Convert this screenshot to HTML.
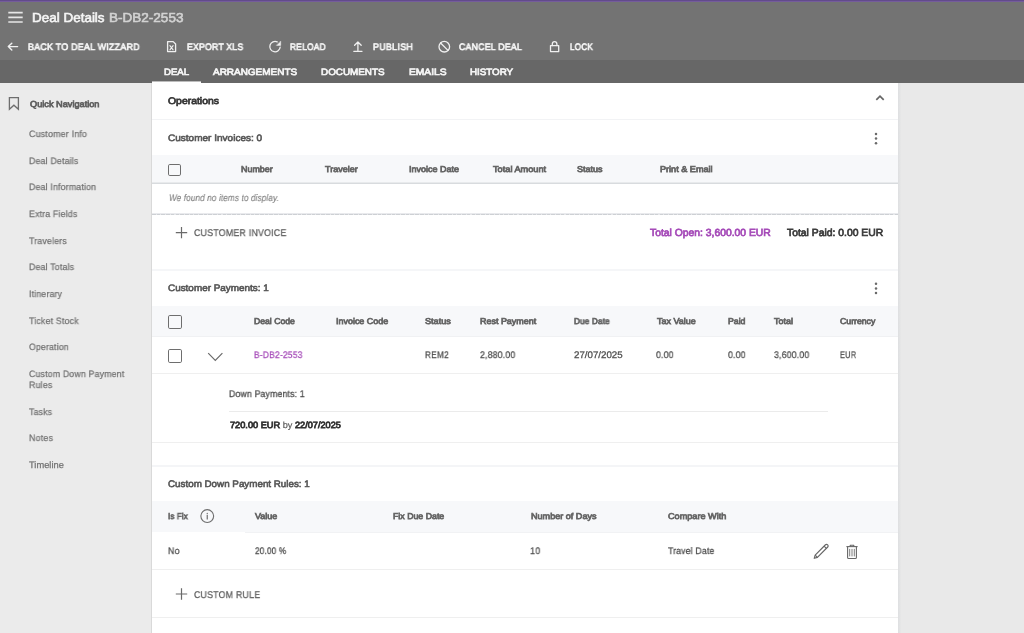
<!DOCTYPE html>
<html><head><meta charset="utf-8">
<style>
html,body{margin:0;padding:0}
body{width:1024px;height:633px;overflow:hidden;position:relative;background:#e9e9e9;font-family:"Liberation Sans",sans-serif}
.b{position:absolute}
.t{position:absolute;white-space:nowrap;will-change:transform;text-rendering:geometricPrecision;transform-origin:0 0;font-family:"Liberation Sans",sans-serif}
svg{position:absolute;overflow:visible}
.hl{position:absolute;height:1px}
.cb{position:absolute;box-sizing:border-box;border:1.9px solid #6e6e6e;border-radius:1.8px;background:transparent}
</style></head><body>
<!-- bars -->
<div class="b" style="left:0;top:0;width:1024px;height:1px;background:#624a8c"></div>
<div class="b" style="left:0;top:1px;width:1024px;height:1px;background:#745c9b"></div>
<div class="b" style="left:0;top:2px;width:1024px;height:58px;background:#737373"></div>
<div class="b" style="left:0;top:60px;width:1024px;height:23px;background:#676767"></div>
<div class="b" style="left:0;top:83px;width:152px;height:550px;background:#ebebeb"></div>
<div class="b" style="left:898px;top:83px;width:126px;height:550px;background:#e9e9e9"></div>
<div class="b" style="left:151px;top:83px;width:1px;height:550px;background:#d9d9d9"></div>
<div class="b" style="left:898px;top:83px;width:3px;height:550px;background:linear-gradient(90deg,#dedfe1,#e3e4e5 60%,#e8e8e8)"></div>
<div class="b" style="left:152px;top:83px;width:746px;height:550px;background:#fff"></div>
<div class="b" style="left:152px;top:81px;width:49px;height:1px;background:#bcbcbc"></div><div class="b" style="left:152px;top:82px;width:49px;height:1px;background:#fff"></div>

<!-- card lines -->
<div class="hl" style="left:152px;top:119px;width:746px;background:#f2f3f5"></div>
<div class="b" style="left:152px;top:155px;width:746px;height:28px;background:#f7f8fa"></div>
<div class="b" style="left:152px;top:182px;width:746px;height:1px;background:#e8eaec"></div><div class="b" style="left:152px;top:183px;width:746px;height:1px;background:#d8dbde"></div>
<div class="b" style="left:152px;top:213px;width:746px;height:1px;background:#e9eaed"></div><div class="b" style="left:152px;top:214px;width:746px;height:1px;background:repeating-linear-gradient(90deg,#cdd0d4 0,#cdd0d4 3.6px,#e6e7ea 3.6px,#e6e7ea 4.7px)"></div>
<div class="b" style="left:152px;top:269px;width:746px;height:2px;background:#f5f6f8"></div>
<div class="b" style="left:152px;top:306px;width:746px;height:30px;background:#f7f8fa"></div>
<div class="hl" style="left:152px;top:336px;width:746px;background:#f0f1f3"></div>
<div class="hl" style="left:152px;top:373px;width:746px;background:#efefef"></div>
<div class="b" style="left:229px;top:411px;width:599px;height:1px;background:#ebebeb"></div>
<div class="hl" style="left:152px;top:442px;width:746px;background:#efefef"></div>
<div class="b" style="left:152px;top:465px;width:746px;height:2px;background:#f4f5f7"></div>
<div class="b" style="left:152px;top:501px;width:746px;height:31px;background:#f7f8fa"></div>
<div class="hl" style="left:245px;top:532px;width:653px;background:#f1f2f4"></div>
<div class="hl" style="left:152px;top:569px;width:746px;background:#efefef"></div>
<div class="hl" style="left:152px;top:617px;width:746px;background:#efefef"></div>

<!-- header icons -->
<svg width="1024" height="633" style="left:0;top:0" viewBox="0 0 1024 633">
 <g stroke="#e6e6e6" stroke-width="1.7" fill="none" stroke-linecap="butt">
  <path d="M8.3 12.6H22.7M8.3 17.3H22.7M8.3 22H22.7"/>
 </g>
 <g stroke="#f0f0f0" stroke-width="1.3" fill="none" stroke-linecap="round" stroke-linejoin="round">
  <!-- back arrow -->
  <path d="M17.6 46.6H8.3M11.8 43.2L8.3 46.6L11.8 50.1" stroke-width="1.45"/>
  <!-- xls -->
  <path d="M167.6 41.6H173.2L175.6 44V51.6H167.6Z"/>
  <path d="M169.9 45.6L173.1 49.8M173.1 45.6L169.9 49.8" stroke-width="1.1"/>
  <!-- reload -->
  <path d="M280.2 47.05A5.2 5.2 0 1 1 277.2 41.9"/>
  <path d="M280.7 41.4V45.4H276.7Z" fill="#f0f0f0" stroke-width="0.5"/>
  <!-- upload -->
  <path d="M357.9 50.2V42.2M354.6 45.3L357.9 42L361.2 45.3M353.8 51.3H362"/>
  <!-- cancel -->
  <circle cx="444.3" cy="46.7" r="5.3"/>
  <path d="M440.6 43L448 50.4"/>
  <!-- lock -->
  <rect x="550.5" y="45.6" width="8.2" height="6"/>
  <path d="M552.3 45.6V44A2.3 2.3 0 0 1 556.9 44V45.6"/>
 </g>
 <!-- bookmark -->
 <path d="M9.4 97.7H18.4V109.3L13.9 105.2L9.4 109.3Z" stroke="#6e6e6e" stroke-width="1.3" fill="none" stroke-linejoin="miter"/>
 <!-- chevron up -->
 <path d="M876.3 99.9L880 96.2L883.7 99.9" stroke="#666" stroke-width="1.7" fill="none" stroke-linecap="butt"/>
 <!-- kebabs -->
 <g fill="#6a6a6a">
  <circle cx="876" cy="134.1" r="1.25"/><circle cx="876" cy="138.6" r="1.25"/><circle cx="876" cy="143.3" r="1.25"/>
  <circle cx="876" cy="283.8" r="1.25"/><circle cx="876" cy="288.5" r="1.25"/><circle cx="876" cy="293.1" r="1.25"/>
 </g>
 <!-- chevron down -->
 <path d="M208.2 353.2L215.3 360.3L222.4 353.2" stroke="#6a6a6a" stroke-width="1.2" fill="none"/>
 <!-- plus -->
 <g stroke="#6a6a6a" stroke-width="1.2" fill="none">
  <path d="M175.8 232.6H187.2M181.5 226.9V238.3"/>
  <path d="M175.8 594H187.2M181.5 588.3V599.7"/>
 </g>
 <!-- info -->
 <g stroke="#6e6e6e" fill="none">
  <circle cx="207.25" cy="516.05" r="6.4" stroke-width="1.1"/>
  <path d="M207.25 514.8V519.4" stroke-width="1.2"/>
 </g>
 <circle cx="207.25" cy="513.4" r="0.65" fill="#6e6e6e"/>
 <!-- pencil -->
 <g stroke="#666" stroke-width="1.15" fill="none" stroke-linejoin="round">
  <path d="M814.2 558.3L815.17 555.07L825.47 544.77A1.6 1.6 0 0 1 827.73 547.03L817.43 557.33Z"/>
  <path d="M815.17 555.07L817.43 557.33M824.07 546.17L826.33 548.43"/>
 </g>
 <!-- trash -->
 <g stroke="#666" stroke-width="1.1" fill="none" stroke-linejoin="round">
  <path d="M846.4 546.6H857.6"/>
  <path d="M850.2 546.4V545.3H853.8V546.4"/>
  <path d="M847.6 546.8V557.4A1.1 1.1 0 0 0 848.7 558.5H855.3A1.1 1.1 0 0 0 856.4 557.4V546.8"/>
  <path d="M849.7 548.9V556.4M852 548.9V556.4M854.3 548.9V556.4" stroke-width="0.85"/>
 </g>
</svg>
<div class="cb" style="left:168px;top:164px;width:12.5px;height:12px"></div>
<div class="cb" style="left:168px;top:315px;width:13.6px;height:13.6px"></div>
<div class="cb" style="left:168px;top:349px;width:13.6px;height:13.5px"></div>

<div class="t" style="left:32.06px;top:11.00px;font-size:12.99px;line-height:12.99px;font-style:normal;color:#f5f5f5;-webkit-text-stroke:0.6px #f5f5f5;letter-spacing:0.000px;transform:scaleX(1.0370)">Deal Details</div>
<div class="t" style="left:108.96px;top:11.00px;font-size:12.99px;line-height:12.99px;font-style:normal;color:#d2d2d2;-webkit-text-stroke:0.6px #d2d2d2;letter-spacing:0.000px;transform:scaleX(1.0419)">B-DB2-2553</div>
<div class="t" style="left:27.65px;top:43.01px;font-size:9.36px;line-height:9.36px;font-style:normal;color:#f4f4f4;-webkit-text-stroke:0.7px #f4f4f4;letter-spacing:0.250px;transform:scaleX(0.9519)">BACK TO DEAL WIZZARD</div>
<div class="t" style="left:187.15px;top:43.01px;font-size:9.36px;line-height:9.36px;font-style:normal;color:#f4f4f4;-webkit-text-stroke:0.7px #f4f4f4;letter-spacing:0.273px;transform:scaleX(0.9246)">EXPORT XLS</div>
<div class="t" style="left:289.85px;top:43.01px;font-size:9.36px;line-height:9.36px;font-style:normal;color:#f4f4f4;-webkit-text-stroke:0.7px #f4f4f4;letter-spacing:0.328px;transform:scaleX(0.8899)">RELOAD</div>
<div class="t" style="left:373.15px;top:43.01px;font-size:9.36px;line-height:9.36px;font-style:normal;color:#f4f4f4;-webkit-text-stroke:0.7px #f4f4f4;letter-spacing:0.277px;transform:scaleX(0.9543)">PUBLISH</div>
<div class="t" style="left:459.35px;top:43.01px;font-size:9.36px;line-height:9.36px;font-style:normal;color:#f4f4f4;-webkit-text-stroke:0.7px #f4f4f4;letter-spacing:0.273px;transform:scaleX(0.9349)">CANCEL DEAL</div>
<div class="t" style="left:570.05px;top:43.01px;font-size:9.36px;line-height:9.36px;font-style:normal;color:#f4f4f4;-webkit-text-stroke:0.7px #f4f4f4;letter-spacing:0.374px;transform:scaleX(0.8597)">LOCK</div>
<div class="t" style="left:164.05px;top:68.01px;font-size:9.22px;line-height:9.22px;font-style:normal;color:#f4f4f4;-webkit-text-stroke:0.7px #f4f4f4;letter-spacing:0.000px;transform:scaleX(1.0383)">DEAL</div>
<div class="t" style="left:213.35px;top:68.01px;font-size:9.22px;line-height:9.22px;font-style:normal;color:#f4f4f4;-webkit-text-stroke:0.7px #f4f4f4;letter-spacing:0.000px;transform:scaleX(1.0803)">ARRANGEMENTS</div>
<div class="t" style="left:321.35px;top:68.01px;font-size:9.22px;line-height:9.22px;font-style:normal;color:#f4f4f4;-webkit-text-stroke:0.7px #f4f4f4;letter-spacing:0.000px;transform:scaleX(1.0707)">DOCUMENTS</div>
<div class="t" style="left:408.95px;top:68.01px;font-size:9.22px;line-height:9.22px;font-style:normal;color:#f4f4f4;-webkit-text-stroke:0.7px #f4f4f4;letter-spacing:0.000px;transform:scaleX(1.1116)">EMAILS</div>
<div class="t" style="left:470.25px;top:68.01px;font-size:9.22px;line-height:9.22px;font-style:normal;color:#f4f4f4;-webkit-text-stroke:0.7px #f4f4f4;letter-spacing:0.000px;transform:scaleX(1.0608)">HISTORY</div>
<div class="t" style="left:29.88px;top:100.00px;font-size:8.73px;line-height:8.73px;font-style:normal;color:#616161;-webkit-text-stroke:0.75px #616161;letter-spacing:0.000px;transform:scaleX(1.0538)">Quick Navigation</div>
<div class="t" style="left:29.43px;top:130.00px;font-size:9.29px;line-height:9.29px;font-style:normal;color:#727272;-webkit-text-stroke:0.25px #727272;letter-spacing:0.203px;transform:scaleX(0.9538)">Customer Info</div>
<div class="t" style="left:29.43px;top:157.01px;font-size:9.29px;line-height:9.29px;font-style:normal;color:#727272;-webkit-text-stroke:0.25px #727272;letter-spacing:0.192px;transform:scaleX(0.9443)">Deal Details</div>
<div class="t" style="left:29.43px;top:183.01px;font-size:9.29px;line-height:9.29px;font-style:normal;color:#727272;-webkit-text-stroke:0.25px #727272;letter-spacing:0.189px;transform:scaleX(0.9443)">Deal Information</div>
<div class="t" style="left:29.43px;top:210.01px;font-size:9.29px;line-height:9.29px;font-style:normal;color:#727272;-webkit-text-stroke:0.25px #727272;letter-spacing:0.188px;transform:scaleX(0.9443)">Extra Fields</div>
<div class="t" style="left:29.43px;top:237.01px;font-size:9.29px;line-height:9.29px;font-style:normal;color:#727272;-webkit-text-stroke:0.25px #727272;letter-spacing:0.203px;transform:scaleX(0.9443)">Travelers</div>
<div class="t" style="left:29.43px;top:263.02px;font-size:9.29px;line-height:9.29px;font-style:normal;color:#727272;-webkit-text-stroke:0.25px #727272;letter-spacing:0.194px;transform:scaleX(0.9443)">Deal Totals</div>
<div class="t" style="left:29.43px;top:290.02px;font-size:9.29px;line-height:9.29px;font-style:normal;color:#727272;-webkit-text-stroke:0.25px #727272;letter-spacing:0.178px;transform:scaleX(0.9443)">Itinerary</div>
<div class="t" style="left:29.43px;top:317.01px;font-size:9.29px;line-height:9.29px;font-style:normal;color:#727272;-webkit-text-stroke:0.25px #727272;letter-spacing:0.192px;transform:scaleX(0.9485)">Ticket Stock</div>
<div class="t" style="left:29.43px;top:343.01px;font-size:9.29px;line-height:9.29px;font-style:normal;color:#727272;-webkit-text-stroke:0.25px #727272;letter-spacing:0.213px;transform:scaleX(0.9330)">Operation</div>
<div class="t" style="left:29.43px;top:370.01px;font-size:9.29px;line-height:9.29px;font-style:normal;color:#727272;-webkit-text-stroke:0.25px #727272;letter-spacing:0.227px;transform:scaleX(0.9369)">Custom Down Payment</div>
<div class="t" style="left:29.43px;top:381.00px;font-size:9.29px;line-height:9.29px;font-style:normal;color:#727272;-webkit-text-stroke:0.25px #727272;letter-spacing:0.254px;transform:scaleX(0.9443)">Rules</div>
<div class="t" style="left:29.43px;top:408.01px;font-size:9.29px;line-height:9.29px;font-style:normal;color:#727272;-webkit-text-stroke:0.25px #727272;letter-spacing:0.253px;transform:scaleX(0.9311)">Tasks</div>
<div class="t" style="left:29.43px;top:434.01px;font-size:9.29px;line-height:9.29px;font-style:normal;color:#727272;-webkit-text-stroke:0.25px #727272;letter-spacing:0.259px;transform:scaleX(0.9443)">Notes</div>
<div class="t" style="left:29.43px;top:461.01px;font-size:9.29px;line-height:9.29px;font-style:normal;color:#727272;-webkit-text-stroke:0.25px #727272;letter-spacing:0.000px;transform:scaleX(1.0024)">Timeline</div>
<div class="t" style="left:168.28px;top:97.00px;font-size:9.57px;line-height:9.57px;font-style:normal;color:#3a3a3a;-webkit-text-stroke:0.75px #3a3a3a;letter-spacing:0.000px;transform:scaleX(1.0891)">Operations</div>
<div class="t" style="left:168.20px;top:134.01px;font-size:9.36px;line-height:9.36px;font-style:normal;color:#575757;-webkit-text-stroke:0.6px #575757;letter-spacing:0.000px;transform:scaleX(1.0730)">Customer Invoices: 0</div>
<div class="t" style="left:241.47px;top:165.00px;font-size:8.45px;line-height:8.45px;font-style:normal;color:#666666;-webkit-text-stroke:0.75px #666666;letter-spacing:0.000px;transform:scaleX(1.0566)">Number</div>
<div class="t" style="left:325.27px;top:165.00px;font-size:8.45px;line-height:8.45px;font-style:normal;color:#666666;-webkit-text-stroke:0.75px #666666;letter-spacing:0.000px;transform:scaleX(1.0674)">Traveler</div>
<div class="t" style="left:408.88px;top:165.00px;font-size:8.45px;line-height:8.45px;font-style:normal;color:#666666;-webkit-text-stroke:0.75px #666666;letter-spacing:0.000px;transform:scaleX(1.0676)">Invoice Date</div>
<div class="t" style="left:492.88px;top:165.00px;font-size:8.45px;line-height:8.45px;font-style:normal;color:#666666;-webkit-text-stroke:0.75px #666666;letter-spacing:0.000px;transform:scaleX(1.0898)">Total Amount</div>
<div class="t" style="left:576.88px;top:165.00px;font-size:8.45px;line-height:8.45px;font-style:normal;color:#666666;-webkit-text-stroke:0.75px #666666;letter-spacing:0.000px;transform:scaleX(1.0633)">Status</div>
<div class="t" style="left:660.38px;top:165.00px;font-size:8.45px;line-height:8.45px;font-style:normal;color:#666666;-webkit-text-stroke:0.75px #666666;letter-spacing:0.000px;transform:scaleX(1.0778)">Print &amp; Email</div>
<div class="t" style="left:168.77px;top:194.00px;font-size:9.57px;line-height:9.57px;font-style:italic;color:#808080;-webkit-text-stroke:0.15px #808080;letter-spacing:0.185px;transform:scaleX(0.8474)">We found no items to display.</div>
<div class="t" style="left:194.15px;top:229.00px;font-size:9.78px;line-height:9.78px;font-style:normal;color:#5f5f5f;-webkit-text-stroke:0.3px #5f5f5f;letter-spacing:0.276px;transform:scaleX(0.8986)">CUSTOMER INVOICE</div>
<div class="t" style="left:649.75px;top:229.01px;font-size:10.34px;line-height:10.34px;font-style:normal;color:#a54ab8;-webkit-text-stroke:0.7px #a54ab8;letter-spacing:0.000px;transform:scaleX(1.0016)">Total Open: 3,600.00 EUR</div>
<div class="t" style="left:786.75px;top:229.01px;font-size:10.34px;line-height:10.34px;font-style:normal;color:#3a3a3a;-webkit-text-stroke:0.7px #3a3a3a;letter-spacing:0.000px;transform:scaleX(1.0030)">Total Paid: 0.00 EUR</div>
<div class="t" style="left:168.10px;top:284.01px;font-size:9.36px;line-height:9.36px;font-style:normal;color:#575757;-webkit-text-stroke:0.6px #575757;letter-spacing:0.000px;transform:scaleX(1.0604)">Customer Payments: 1</div>
<div class="t" style="left:254.28px;top:317.00px;font-size:8.45px;line-height:8.45px;font-style:normal;color:#666666;-webkit-text-stroke:0.75px #666666;letter-spacing:0.000px;transform:scaleX(1.0238)">Deal Code</div>
<div class="t" style="left:336.48px;top:317.00px;font-size:8.45px;line-height:8.45px;font-style:normal;color:#666666;-webkit-text-stroke:0.75px #666666;letter-spacing:0.000px;transform:scaleX(1.0595)">Invoice Code</div>
<div class="t" style="left:424.98px;top:317.00px;font-size:8.45px;line-height:8.45px;font-style:normal;color:#666666;-webkit-text-stroke:0.75px #666666;letter-spacing:0.000px;transform:scaleX(1.0797)">Status</div>
<div class="t" style="left:480.07px;top:317.00px;font-size:8.45px;line-height:8.45px;font-style:normal;color:#666666;-webkit-text-stroke:0.75px #666666;letter-spacing:0.000px;transform:scaleX(1.0607)">Rest Payment</div>
<div class="t" style="left:573.77px;top:317.00px;font-size:8.45px;line-height:8.45px;font-style:normal;color:#666666;-webkit-text-stroke:0.75px #666666;letter-spacing:0.218px;transform:scaleX(0.9573)">Due Date</div>
<div class="t" style="left:656.67px;top:317.00px;font-size:8.45px;line-height:8.45px;font-style:normal;color:#666666;-webkit-text-stroke:0.75px #666666;letter-spacing:0.000px;transform:scaleX(1.0618)">Tax Value</div>
<div class="t" style="left:728.38px;top:317.00px;font-size:8.45px;line-height:8.45px;font-style:normal;color:#666666;-webkit-text-stroke:0.75px #666666;letter-spacing:0.000px;transform:scaleX(1.0309)">Paid</div>
<div class="t" style="left:773.88px;top:317.00px;font-size:8.45px;line-height:8.45px;font-style:normal;color:#666666;-webkit-text-stroke:0.75px #666666;letter-spacing:0.000px;transform:scaleX(1.0644)">Total</div>
<div class="t" style="left:839.77px;top:317.00px;font-size:8.45px;line-height:8.45px;font-style:normal;color:#666666;-webkit-text-stroke:0.75px #666666;letter-spacing:0.000px;transform:scaleX(1.0319)">Currency</div>
<div class="t" style="left:254.03px;top:351.00px;font-size:9.57px;line-height:9.57px;font-style:normal;color:#a54ab8;-webkit-text-stroke:0.25px #a54ab8;letter-spacing:0.243px;transform:scaleX(0.8823)">B-DB2-2553</div>
<div class="t" style="left:424.73px;top:351.00px;font-size:9.57px;line-height:9.57px;font-style:normal;color:#4a4a4a;-webkit-text-stroke:0.25px #4a4a4a;letter-spacing:0.368px;transform:scaleX(0.8586)">REM2</div>
<div class="t" style="left:479.82px;top:351.00px;font-size:9.57px;line-height:9.57px;font-style:normal;color:#4a4a4a;-webkit-text-stroke:0.25px #4a4a4a;letter-spacing:0.221px;transform:scaleX(0.9069)">2,880.00</div>
<div class="t" style="left:573.52px;top:351.00px;font-size:9.57px;line-height:9.57px;font-style:normal;color:#4a4a4a;-webkit-text-stroke:0.25px #4a4a4a;letter-spacing:0.000px;transform:scaleX(1.0169)">27/07/2025</div>
<div class="t" style="left:656.42px;top:351.00px;font-size:9.57px;line-height:9.57px;font-style:normal;color:#4a4a4a;-webkit-text-stroke:0.25px #4a4a4a;letter-spacing:0.258px;transform:scaleX(0.9060)">0.00</div>
<div class="t" style="left:728.12px;top:351.00px;font-size:9.57px;line-height:9.57px;font-style:normal;color:#4a4a4a;-webkit-text-stroke:0.25px #4a4a4a;letter-spacing:0.258px;transform:scaleX(0.9060)">0.00</div>
<div class="t" style="left:773.62px;top:351.00px;font-size:9.57px;line-height:9.57px;font-style:normal;color:#4a4a4a;-webkit-text-stroke:0.25px #4a4a4a;letter-spacing:0.221px;transform:scaleX(0.9069)">3,600.00</div>
<div class="t" style="left:839.52px;top:351.00px;font-size:9.57px;line-height:9.57px;font-style:normal;color:#4a4a4a;-webkit-text-stroke:0.25px #4a4a4a;letter-spacing:0.428px;transform:scaleX(0.7667)">EUR</div>
<div class="t" style="left:229.45px;top:390.00px;font-size:9.64px;line-height:9.64px;font-style:normal;color:#4d4d4d;-webkit-text-stroke:0.3px #4d4d4d;letter-spacing:0.224px;transform:scaleX(0.8990)">Down Payments: 1</div>
<div class="t" style="left:229.68px;top:421.01px;font-size:9.01px;line-height:9.01px;font-style:normal;color:#333333;-webkit-text-stroke:0.75px #333333;letter-spacing:0.000px;transform:scaleX(1.0217)">720.00 EUR <span style="-webkit-text-stroke:0.15px #555;color:#555">by</span> 22/07/2025</div>
<div class="t" style="left:168.30px;top:480.02px;font-size:9.5px;line-height:9.5px;font-style:normal;color:#575757;-webkit-text-stroke:0.6px #575757;letter-spacing:0.000px;transform:scaleX(1.0328)">Custom Down Payment Rules: 1</div>
<div class="t" style="left:168.38px;top:512.01px;font-size:8.45px;line-height:8.45px;font-style:normal;color:#666666;-webkit-text-stroke:0.75px #666666;letter-spacing:0.181px;transform:scaleX(0.9385)">Is Fix</div>
<div class="t" style="left:254.97px;top:512.01px;font-size:8.45px;line-height:8.45px;font-style:normal;color:#666666;-webkit-text-stroke:0.75px #666666;letter-spacing:0.000px;transform:scaleX(1.0586)">Value</div>
<div class="t" style="left:392.57px;top:512.01px;font-size:8.45px;line-height:8.45px;font-style:normal;color:#666666;-webkit-text-stroke:0.75px #666666;letter-spacing:0.000px;transform:scaleX(1.0399)">Fix Due Date</div>
<div class="t" style="left:530.67px;top:512.01px;font-size:8.45px;line-height:8.45px;font-style:normal;color:#666666;-webkit-text-stroke:0.75px #666666;letter-spacing:0.000px;transform:scaleX(1.0750)">Number of Days</div>
<div class="t" style="left:667.88px;top:512.01px;font-size:8.45px;line-height:8.45px;font-style:normal;color:#666666;-webkit-text-stroke:0.75px #666666;letter-spacing:0.000px;transform:scaleX(1.0804)">Compare With</div>
<div class="t" style="left:168.12px;top:547.00px;font-size:9.57px;line-height:9.57px;font-style:normal;color:#4a4a4a;-webkit-text-stroke:0.25px #4a4a4a;letter-spacing:0.506px;transform:scaleX(0.9003)">No</div>
<div class="t" style="left:254.72px;top:547.00px;font-size:9.57px;line-height:9.57px;font-style:normal;color:#4a4a4a;-webkit-text-stroke:0.25px #4a4a4a;letter-spacing:0.249px;transform:scaleX(0.8519)">20.00 %</div>
<div class="t" style="left:530.42px;top:547.00px;font-size:9.57px;line-height:9.57px;font-style:normal;color:#4a4a4a;-webkit-text-stroke:0.25px #4a4a4a;letter-spacing:0.440px;transform:scaleX(0.9266)">10</div>
<div class="t" style="left:667.62px;top:547.00px;font-size:9.57px;line-height:9.57px;font-style:normal;color:#4a4a4a;-webkit-text-stroke:0.25px #4a4a4a;letter-spacing:0.204px;transform:scaleX(0.9051)">Travel Date</div>
<div class="t" style="left:194.15px;top:591.01px;font-size:9.78px;line-height:9.78px;font-style:normal;color:#5f5f5f;-webkit-text-stroke:0.3px #5f5f5f;letter-spacing:0.299px;transform:scaleX(0.8932)">CUSTOM RULE</div>
</body></html>
